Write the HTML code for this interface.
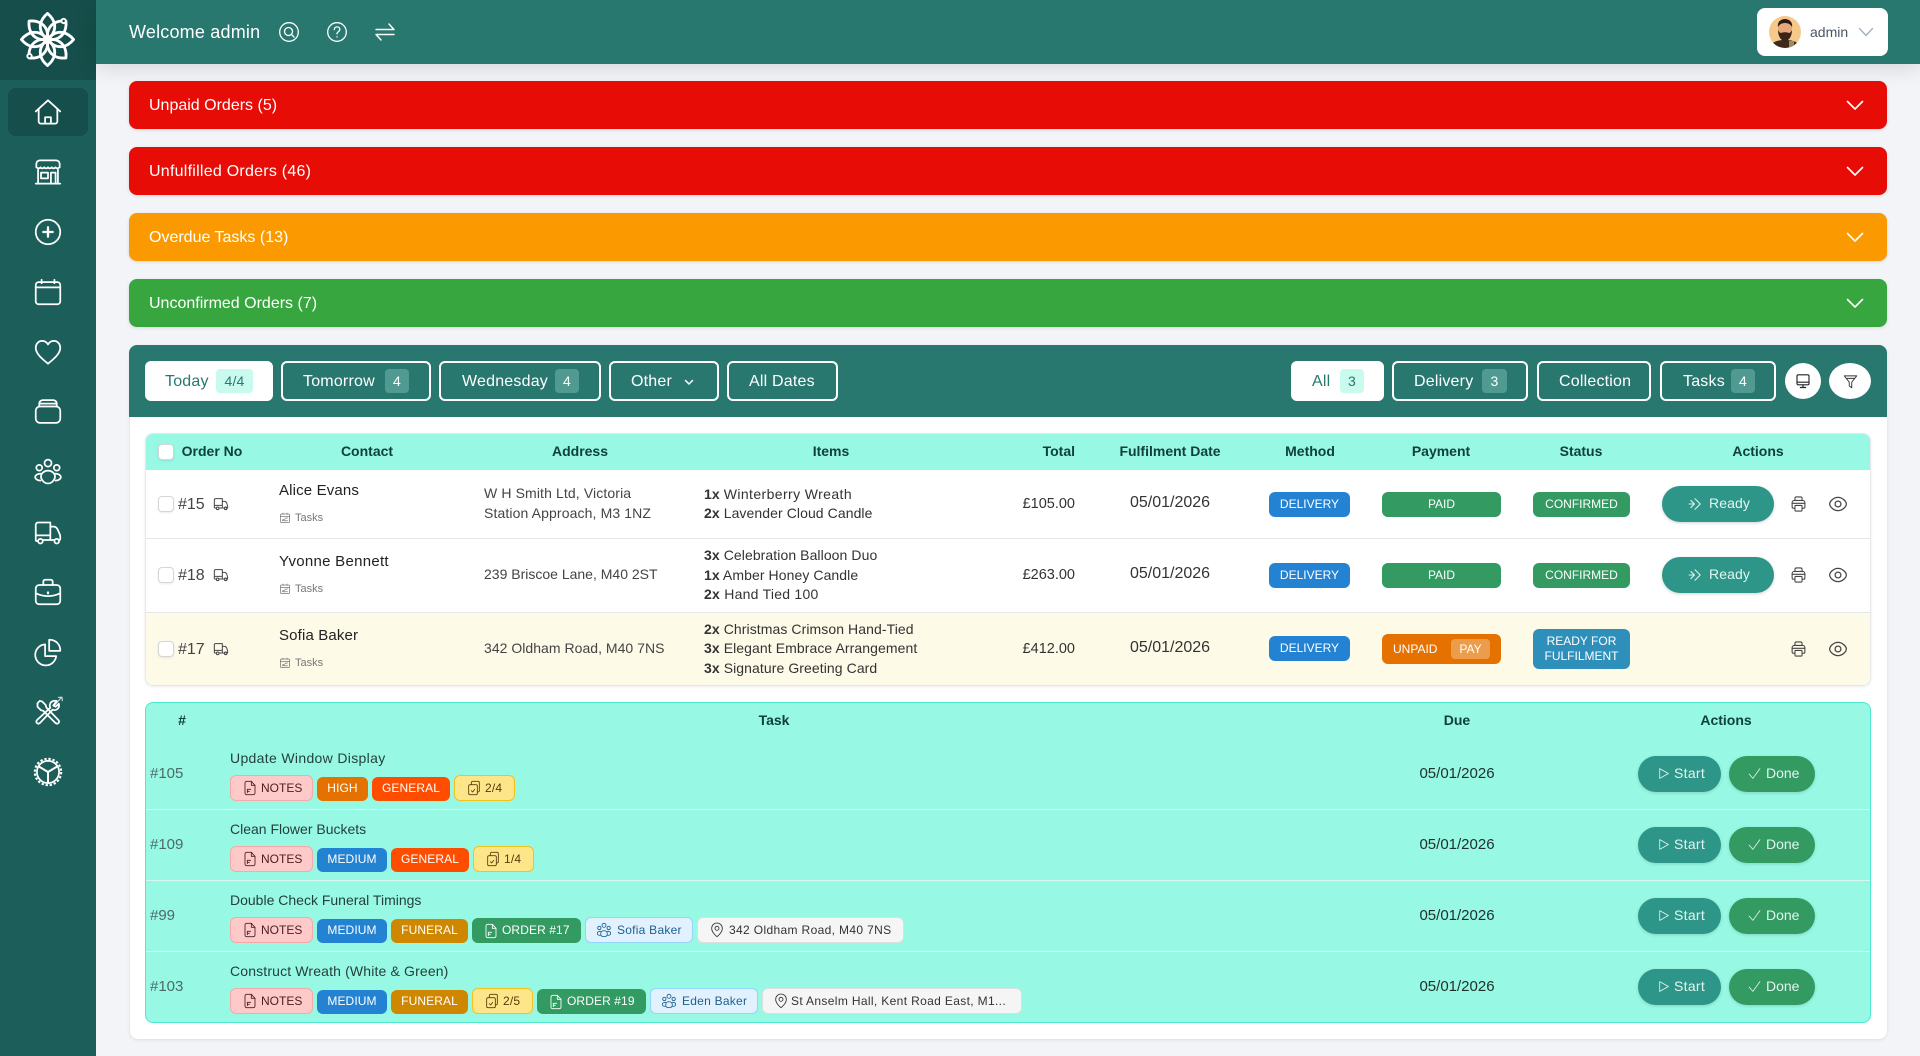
<!DOCTYPE html>
<html lang="en"><head><meta charset="utf-8"><title>Dashboard</title>
<style>
*{box-sizing:border-box}
html,body{margin:0;padding:0}
body{position:relative;width:1920px;height:1056px;overflow:hidden;background:#f2f4f8;font-family:"Liberation Sans",sans-serif;color:#222}
.a{position:absolute}
.t{position:absolute;white-space:nowrap;line-height:20px;height:20px}
.c{text-align:center;transform:translateX(-50%)}
.r{transform:translateX(-100%)}
svg{position:absolute;fill:none;stroke:currentColor;stroke-width:1.5;stroke-linecap:round;stroke-linejoin:round;overflow:visible}
.side svg{color:#fff;width:28px;height:28px;left:34px}
.al{position:absolute;left:129px;width:1758px;height:48px;border-radius:8px;color:#fff;font-size:16px;line-height:50px;padding-left:20px;box-shadow:0 1px 3px rgba(0,0,0,.12)}
.al svg{left:1718px;top:20px;width:16px;height:9px;stroke-width:1.6;color:#fff}
.btn{position:absolute;top:361px;height:40px;border-radius:6px;border:2px solid #fff;color:#fff;font-size:16px;letter-spacing:.2px}
.btn.on{background:#fff;color:#287870;border-color:#fff}
.btn span{position:absolute;top:0;line-height:38px;white-space:nowrap}
.cnt{position:absolute;top:6px;height:24px;width:24px;border-radius:4px;background:#519a92;color:#fff;font-size:14px;line-height:24px;text-align:center;font-style:normal}
.on .cnt{background:#c8faee;color:#287870}
.circ{position:absolute;top:363px;height:36px;border-radius:50%;background:#fff;color:#333}
.th{position:absolute;white-space:nowrap;font-size:14px;font-weight:700;line-height:20px;height:20px;color:#10403c}
.cb{position:absolute;width:16px;height:16px;border:1px solid #d4d6da;border-radius:4px;background:#fff;box-shadow:0 1px 2px rgba(0,0,0,.08)}
.sep{position:absolute;height:1px;background:#e5e7eb}
.no{font-size:16px;color:#444}
.nm{font-size:15px;color:#222;letter-spacing:.15px;margin-top:1px}
.tk{font-size:11px;color:#777;margin-top:1px}
.ad{font-size:14px;color:#444}
.it{font-size:14px;color:#333;letter-spacing:.08px}
.it b{font-weight:700;color:#333}
.tot{font-size:14.500px;color:#333}
.dt{font-size:16px;color:#333}
.pl{position:absolute;border-radius:6px;color:#fff;font-size:12px;display:flex;align-items:center;justify-content:center;white-space:nowrap;line-height:15px;text-align:center}
.rd{position:absolute;left:1662px;width:112px;height:36px;border-radius:18px;background:#2e9688;color:#e3f5f1;font-size:14px;line-height:35px;padding-left:47px;letter-spacing:.1px;box-shadow:0 1px 3px rgba(0,0,0,.18)}
.rd svg{left:26px;top:11px;width:14px;height:14px;color:#e3f5f1}
.ic{color:#444;stroke-width:1.5}
.tg{position:absolute;height:26px;border-radius:6px;font-size:12px;line-height:24px;white-space:nowrap;border:1px solid transparent}
.tg svg{width:16px;height:18px;top:3px;stroke-width:1.3}
.tg span{position:absolute;top:0;white-space:nowrap}
.col{top:2px;height:24px;color:#fff;text-align:center;line-height:23px;border:0;letter-spacing:.1px}
.nt{background:#fec9c9;border:1px solid #f7a8a8;color:#4d1d1d;left:230px;width:83px}
.cl{background:#fde68a;border:1px solid #f7c11b;color:#5a3a0a}
.us{background:#e1f2fe;border:1px solid #93d5fc;color:#1e5f8e;letter-spacing:.25px}
.lo{background:#f5f5f5;border:1px solid #dedede;color:#333;letter-spacing:.35px}
.ord{background:#339a62;color:#fff;top:1px;height:25px;border:0}
.tt{font-size:14px;color:#24403c}
.id{font-size:15px;color:#4c6a66;margin-top:1px}
.due{font-size:15px;color:#1f2f2d;margin-top:1px}
.st{position:absolute;left:1638px;width:83px;height:36px;border-radius:18px;background:#2e9688;color:#e3f5f1;font-size:14px;line-height:35px;padding-left:36px;letter-spacing:.3px;box-shadow:0 1px 3px rgba(0,0,0,.15)}
.dn{position:absolute;left:1729px;width:86px;height:36px;border-radius:18px;background:#339a62;color:#e3f5f1;font-size:14px;line-height:35px;padding-left:37px;box-shadow:0 1px 3px rgba(0,0,0,.15)}
.st svg,.dn svg{left:19px;top:11px;width:13px;height:13px;color:#e3f5f1}
.trk{left:213px;width:16px;height:16px;color:#444;stroke-width:1.500}
.cali{left:279px;width:12px;height:13px;color:#777;stroke-width:1.500}
</style></head><body>
<svg width="0" height="0" style="position:absolute">
<symbol id="truck" viewBox="0 0 24 24"><path d="M2 17V6a2 2 0 0 1 2-2h10v13M2 17a1 1 0 0 0 1 1h1.500M14 8h3.500c1.500 0 2.300.8 3 2.500l1 3c.3.800.5 1.500.5 2.500v1a1 1 0 0 1-1 1h-1.500M9.500 18H16.500M2 14h12"/><circle cx="7" cy="18.500" r="2"/><circle cx="19" cy="18.500" r="2"/></symbol>
<symbol id="cal" viewBox="0 0 24 24"><rect x="3" y="5" width="18" height="17" rx="2"/><path d="M3 10h18M8 3v3M16 3v3M7 17l3-1 4-3 3 0M7 18.500h10"/></symbol>
<symbol id="prn" viewBox="0 0 24 24"><path d="M7 7V4a2 2 0 0 1 2-2h6a2 2 0 0 1 2 2v3M7 18H5a2 2 0 0 1-2-2v-6a3 3 0 0 1 3-3h12a3 3 0 0 1 3 3v6a2 2 0 0 1-2 2h-2"/><rect x="7" y="14" width="10" height="8" rx="1"/><path d="M3 11h18"/></symbol>
<symbol id="eye" viewBox="0 0 24 24"><path d="M12 4c5.500 0 10 5 10 8s-4.500 8-10 8-10-5-10-8 4.500-8 10-8z"/><circle cx="12" cy="12" r="3.500"/></symbol>
<symbol id="dbl" viewBox="0 0 24 24"><path d="M12 3l9 9-9 9M5 6l6 6-6 6M2 12h9" stroke-width="1.800"/></symbol>
<symbol id="doc" viewBox="0 0 24 24"><path d="M14 2H7a2.500 2.500 0 0 0-2.500 2.500v15A2.500 2.500 0 0 0 7 22h10a2.500 2.500 0 0 0 2.500-2.500V8z"/><path d="M14 2v6h5.500M8 14h5M8 17h3M8 14v5"/></symbol>
<symbol id="clip" viewBox="0 0 24 24"><rect x="4" y="7" width="13" height="15" rx="2"/><path d="M8 7V4a2 2 0 0 1 2-2h8a2 2 0 0 1 2 2v12a2 2 0 0 1-2 2h-1M8 16l2 2 3-4"/></symbol>
<symbol id="us" viewBox="0 0 24 24"><circle cx="12" cy="5" r="3"/><circle cx="5" cy="9" r="2.500"/><circle cx="19" cy="9" r="2.500"/><path d="M7 18c0-3 2-5 5-5s5 2 5 5-2 4-5 4-5-1-5-4zM7 14c-3 0-5 1-5 3s2 3 4 3M17 14c3 0 5 1 5 3s-2 3-4 3"/></symbol>
<symbol id="pin" viewBox="0 0 24 24"><path d="M12 22s-8-6-8-12.500A8 8 0 0 1 20 9.500C20 16 12 22 12 22z"/><circle cx="12" cy="9.500" r="3"/></symbol>
<symbol id="play" viewBox="0 0 24 24"><path d="M5 3l16 9-16 9z"/></symbol>
<symbol id="chk" viewBox="0 0 24 24"><path d="M2 13l7 8L22 3"/></symbol>
<symbol id="pet" viewBox="0 0 58 58"><path d="M29 1.500C37 8 39 17 33.500 24.500L29 30l-4.500-5.500C19 17 21 8 29 1.500z"/></symbol>
</svg>

<!-- sidebar -->
<div class="a side" style="left:0;top:0;width:96px;height:1056px;background:#1c5f5a">
<div class="a" style="left:0;top:0;width:96px;height:80px;background:#154e4a"></div>
<svg style="left:20px;top:12px;width:55px;height:55px;color:#fff;stroke-width:3" viewBox="0 0 58 58">
<use href="#pet"/>
<use href="#pet" transform="rotate(45 29 29)"/>
<use href="#pet" transform="rotate(90 29 29)"/>
<use href="#pet" transform="rotate(135 29 29)"/>
<use href="#pet" transform="rotate(180 29 29)"/>
<use href="#pet" transform="rotate(225 29 29)"/>
<use href="#pet" transform="rotate(270 29 29)"/>
<use href="#pet" transform="rotate(315 29 29)"/>
<circle cx="46" cy="9.500" r="2.300" fill="#154e4a" stroke-width="2"/><circle cx="10" cy="46.500" r="2.300" fill="#154e4a" stroke-width="2"/>
</svg>
<div class="a" style="left:8px;top:88px;width:80px;height:48px;border-radius:8px;background:#154e4a"></div>
<svg style="top:98px" viewBox="0 0 24 24"><path d="M1.500 11.500L12 2l10.500 9.500M4 9.500V20a2 2 0 0 0 2 2h12a2 2 0 0 0 2-2V9.500M9.500 22v-5.500h5V22"/></svg>
<svg style="top:158px" viewBox="0 0 24 24"><path d="M2 8V5a3 3 0 0 1 3-3h14a3 3 0 0 1 3 3v3c-1.500 1.200-3 1-3.600 0-1 1.200-2.500 1.200-3.200 0-1 1.200-2.400 1.200-3.200 0-1 1.200-2.400 1.200-3.200 0-1 1.200-2.500 1.200-3.200 0C5 9 3.500 9.200 2 8zM3.500 10v12M20.500 10v12M1.500 22h21"/><rect x="6" y="12.500" width="6" height="5"/><path d="M14.500 22v-9.500h4V22"/></svg>
<svg style="top:218px" viewBox="0 0 24 24"><circle cx="12" cy="12" r="10.500"/><path d="M8 12h8M12 8v8" stroke-width="2"/></svg>
<svg style="top:278px" viewBox="0 0 24 24"><rect x="1.500" y="3.500" width="21" height="19" rx="2.500"/><path d="M1.500 8h21M6.500 1.500v3M17.500 1.500v3"/></svg>
<svg style="top:338px" viewBox="0 0 24 24"><path d="M12 22C7 18 1.500 13.500 1.500 8.500 1.500 5 4 2.500 7 2.500c2 0 3.800 1 5 3 1.200-2 3-3 5-3 3 0 5.500 2.500 5.500 6 0 5-5.500 9.500-10.500 13.500z"/></svg>
<svg style="top:396px" viewBox="0 0 24 24"><rect x="1.500" y="9" width="21" height="14" rx="3.500"/><path d="M4.500 9V6.500A3 3 0 0 1 7.500 3.500h9a3 3 0 0 1 3 3V9M5.500 6.500h13"/></svg>
<svg style="top:459px" viewBox="0 0 24 24"><circle cx="12" cy="3.500" r="3"/><circle cx="4.500" cy="7.500" r="2.500"/><circle cx="19.500" cy="7.500" r="2.500"/><path d="M6 15c0-3 3-5 6-5s6 2 6 5-3 6-6 6-6-3-6-6zM5.500 12.500C3 12.500 1 14 1 15.500s2 3 4.500 3M18.500 12.500c2.500 0 4.500 1.500 4.500 3s-2 3-4.500 3"/></svg>
<svg style="top:519px" viewBox="0 0 24 24"><path d="M1.500 18V5a2 2 0 0 1 2-2H14v15H7.500M1.500 14h12.500M14 6.500h3c1.500 0 2.300.8 3 2l2 4.500c.4.900.5 1.700.5 2.500V17a1 1 0 0 1-1 1h-.5M17.500 18H14M1.500 18c0 .6.500 1 1 1"/><circle cx="5.500" cy="19" r="2"/><circle cx="19.500" cy="19" r="2"/></svg>
<svg style="top:578px" viewBox="0 0 24 24"><rect x="1.500" y="6" width="21" height="16.500" rx="3"/><path d="M8 6V3a1.500 1.500 0 0 1 1.500-1.500h5A1.500 1.500 0 0 1 16 3v3M1.500 13C5 15 8 15.500 12 15.500s7-.5 10.500-2.500"/><path d="M12 12.500v.5" stroke-width="2"/></svg>
<svg style="top:638px" viewBox="0 0 24 24"><path d="M9.500 5.500A9 9 0 1 0 19 15.500h-9.500z"/><path d="M13 1.500a9 9 0 0 1 9.500 9.500H13z"/></svg>
<svg style="top:698px" viewBox="0 0 24 24"><path d="M3 4.500l2-2 2 .5 3 3 .5 2L21 19c1.500 1.500-.5 4-2.500 2.500L8 11l-2-.5-3-3z"/><path d="M19.500 2.500c-2-.5-4.500 0-5.500 2-.7 1.500-.5 3 0 3.800L2.500 19c-1.500 1.500.5 4 2.500 2.500L16 10c1 .6 2.700.5 4-.5 1.300-1.200 1.800-3 1.300-4.500l-2.800 2.500-2-1z"/><path d="M18 6l5.500-6.500M21 -.5l3 -.2.300 3" stroke-width="1" opacity=".75"/></svg>
<svg style="top:758px" viewBox="0 0 24 24"><circle cx="12" cy="12" r="9.500"/><circle cx="12" cy="12" r="11.300" stroke-width="1.800" stroke-dasharray="2 1.550" stroke-linecap="butt"/><path d="M12 12V21M12 12L4.500 7.500M12 12l7.500-4.500" stroke-width="1.700"/></svg>
</div>

<!-- topbar -->
<div class="a" style="left:96px;top:0;width:1824px;height:64px;background:#287870;box-shadow:0 4px 20px rgba(0,0,0,.12)"></div>
<div class="t" style="left:129px;top:22px;font-size:18px;color:#fff;letter-spacing:.2px">Welcome admin</div>
<svg style="left:279px;top:22px;width:20px;height:20px;color:#fff;stroke-width:1.300" viewBox="0 0 20 20"><circle cx="10" cy="10" r="9.300"/><circle cx="9.500" cy="9.500" r="4"/><path d="M12.500 12.500l2.500 2.500"/></svg>
<svg style="left:327px;top:22px;width:20px;height:20px;color:#fff;stroke-width:1.300" viewBox="0 0 20 20"><circle cx="10" cy="10" r="9.300"/><path d="M7.300 7.600c0-1.600 1.200-2.700 2.800-2.700s2.700 1.100 2.700 2.500c0 1.300-.8 1.900-1.700 2.500-.8.500-1.100 1-1.100 2M10 14.800v.2"/></svg>
<svg style="left:375px;top:22px;width:20px;height:20px;color:#fff;stroke-width:1.400" viewBox="0 0 20 20"><path d="M1 7.500h18l-5-5.500M19 12.500H1l5 5.500"/></svg>
<div class="a" style="left:1757px;top:8px;width:131px;height:48px;background:#fff;border-radius:8px"></div>
<svg style="left:1769px;top:16px;width:32px;height:32px;stroke:none" viewBox="0 0 32 32"><defs><clipPath id="av"><circle cx="16" cy="16" r="16"/></clipPath></defs><g clip-path="url(#av)"><rect width="32" height="32" fill="#f6c98a"/><path d="M1 32c1-6 7-8 15-8s14 2 15 8z" fill="#3b2a1d"/><ellipse cx="16" cy="13" rx="7" ry="8" fill="#e6a878"/><path d="M9 14c0 6 3 11 7 11s7-5 7-11c-1 2-2 3-3 3-2-1-6-1-8 0-1 0-2-1-3-3z" fill="#3a2419"/><path d="M9 11c-1-5 3-8 7-8s8 3 7 8c-1-2-3-4-7-4s-6 2-7 4z" fill="#2b1a12"/><rect x="20" y="25" width="5" height="6" fill="#a08a62"/></g></svg>
<div class="t" style="left:1810px;top:22px;font-size:14px;color:#4a5568">admin</div>
<svg style="left:1859px;top:28px;width:14px;height:8px;color:#a0aec0;stroke-width:1.300" viewBox="0 0 14 8"><path d="M.5.5L7 7.500 13.500.5"/></svg>

<!-- alerts -->
<div class="al" style="top:81px;background:#e80c07">Unpaid Orders (5)<svg viewBox="0 0 16 9"><path d="M.5.500L8 8 15.500.5"/></svg></div>
<div class="al" style="top:147px;background:#e80c07;letter-spacing:.25px">Unfulfilled Orders (46)<svg viewBox="0 0 16 9"><path d="M.5.500L8 8 15.500.5"/></svg></div>
<div class="al" style="top:213px;background:#fb9a00">Overdue Tasks (13)<svg viewBox="0 0 16 9"><path d="M.5.500L8 8 15.500.5"/></svg></div>
<div class="al" style="top:279px;background:#37a63e">Unconfirmed Orders (7)<svg viewBox="0 0 16 9"><path d="M.5.500L8 8 15.500.5"/></svg></div>

<!-- card -->
<div class="a" style="left:130px;top:345px;width:1757px;height:694px;background:#fff;border-radius:8px;box-shadow:0 1px 3px rgba(0,0,0,.1)"></div>
<div class="a" style="left:129px;top:345px;width:1758px;height:72px;background:#287870;border-radius:8px 8px 0 0"></div>

<div class="btn on" style="left:145px;width:128px"><span style="left:18px">Today</span><i class="cnt" style="left:69px;width:37px">4/4</i></div>
<div class="btn" style="left:281px;width:150px"><span style="left:20px">Tomorrow</span><i class="cnt" style="left:102px">4</i></div>
<div class="btn" style="left:439px;width:162px"><span style="left:21px">Wednesday</span><i class="cnt" style="left:114px">4</i></div>
<div class="btn" style="left:609px;width:110px"><span style="left:20px">Other</span><svg style="left:74px;top:17px;width:8px;height:5px;color:#fff" viewBox="0 0 8 5"><path d="M.5.500L4 4 7.500.5"/></svg></div>
<div class="btn" style="left:727px;width:111px"><span style="left:20px">All Dates</span></div>

<div class="btn on" style="left:1291px;width:93px"><span style="left:19px">All</span><i class="cnt" style="left:47px">3</i></div>
<div class="btn" style="left:1392px;width:136px"><span style="left:20px">Delivery</span><i class="cnt" style="left:88px;width:25px">3</i></div>
<div class="btn" style="left:1537px;width:114px"><span style="left:20px">Collection</span></div>
<div class="btn" style="left:1660px;width:116px"><span style="left:21px">Tasks</span><i class="cnt" style="left:69px">4</i></div>
<div class="circ" style="left:1785px;width:36px"><svg style="left:10px;top:10px;width:16px;height:17px;color:#222;stroke-width:1.700" viewBox="0 0 24 24"><rect x="3" y="2" width="18" height="15" rx="2"/><path d="M3 13h18M8 21h8M12 17v4"/></svg></div>
<div class="circ" style="left:1829px;width:42px"><svg style="left:14px;top:11px;width:15px;height:15px;color:#333;stroke-width:1.500" viewBox="0 0 24 24"><path d="M2 3h20l-8 10v9l-4-3v-6z"/><path d="M6 7h12"/></svg></div>

<!-- orders table -->
<div class="a" style="left:145px;top:433px;width:1726px;height:253px;border:1px solid #e5e7eb;border-radius:8px;box-shadow:0 1px 3px rgba(0,0,0,.08);overflow:hidden">
 <div class="a" style="left:0;top:0;width:1724px;height:36px;background:#97f8e3"></div>
 <div class="a" style="left:0;top:179px;width:1724px;height:73px;background:#fefae8"></div>
</div>
<div class="cb" style="left:158px;top:444px"></div>
<div class="th c" style="left:212px;top:441px">Order No</div>
<div class="th c" style="left:367px;top:441px">Contact</div>
<div class="th c" style="left:580px;top:441px">Address</div>
<div class="th c" style="left:831px;top:441px">Items</div>
<div class="th r" style="left:1075px;top:441px">Total</div>
<div class="th c" style="left:1170px;top:441px">Fulfilment Date</div>
<div class="th c" style="left:1310px;top:441px">Method</div>
<div class="th c" style="left:1441px;top:441px">Payment</div>
<div class="th c" style="left:1581px;top:441px">Status</div>
<div class="th c" style="left:1758px;top:441px">Actions</div>
<div class="sep" style="left:146px;top:538px;width:1724px"></div>
<div class="sep" style="left:146px;top:612px;width:1724px"></div>

<!-- row 1 -->
<div class="cb" style="left:158px;top:496px"></div>
<div class="t no" style="left:178px;top:495px">#15</div>
<svg class="trk" style="top:496px" viewBox="0 0 24 24"><use href="#truck"/></svg>
<div class="t nm" style="left:279px;top:480px">Alice Evans</div>
<svg class="cali" style="top:511px" viewBox="0 0 24 24"><use href="#cal"/></svg>
<div class="t tk" style="left:295px;top:507px">Tasks</div>
<div class="t ad" style="left:484px;top:483px;letter-spacing:.12px">W H Smith Ltd, Victoria</div>
<div class="t ad" style="left:484px;top:503px;letter-spacing:.12px">Station Approach, M3 1NZ</div>
<div class="t it" style="left:704px;top:484px"><b>1x</b> <span style="letter-spacing:.4px">Winterberry Wreath</span></div>
<div class="t it" style="left:704px;top:503px"><b>2x</b> Lavender Cloud Candle</div>
<div class="t tot r" style="left:1075px;top:494px">£105.00</div>
<div class="t dt c" style="left:1170px;top:493px">05/01/2026</div>
<div class="pl" style="left:1269px;top:492px;width:81px;height:25px;background:#2482d3">DELIVERY</div>
<div class="pl" style="left:1382px;top:492px;width:119px;height:25px;background:#339a62">PAID</div>
<div class="pl" style="left:1533px;top:492px;width:97px;height:25px;background:#339a62">CONFIRMED</div>
<div class="rd" style="top:486px"><svg viewBox="0 0 24 24"><use href="#dbl"/></svg>Ready</div>
<svg class="ic" style="left:1790px;top:495px;width:17px;height:18px" viewBox="0 0 24 24"><use href="#prn"/></svg>
<svg class="ic" style="left:1828px;top:494px;width:20px;height:20px" viewBox="0 0 24 24"><use href="#eye"/></svg>

<!-- row 2 -->
<div class="cb" style="left:158px;top:567px"></div>
<div class="t no" style="left:178px;top:566px">#18</div>
<svg class="trk" style="top:567px" viewBox="0 0 24 24"><use href="#truck"/></svg>
<div class="t nm" style="left:279px;top:551px;letter-spacing:.28px">Yvonne Bennett</div>
<svg class="cali" style="top:582px" viewBox="0 0 24 24"><use href="#cal"/></svg>
<div class="t tk" style="left:295px;top:578px">Tasks</div>
<div class="t ad" style="left:484px;top:564px">239 Briscoe Lane, M40 2ST</div>
<div class="t it" style="left:704px;top:545px"><b>3x</b> Celebration Balloon Duo</div>
<div class="t it" style="left:704px;top:565px"><b>1x</b> Amber Honey Candle</div>
<div class="t it" style="left:704px;top:584px;letter-spacing:.25px"><b>2x</b> Hand Tied 100</div>
<div class="t tot r" style="left:1075px;top:565px">£263.00</div>
<div class="t dt c" style="left:1170px;top:564px">05/01/2026</div>
<div class="pl" style="left:1269px;top:563px;width:81px;height:25px;background:#2482d3">DELIVERY</div>
<div class="pl" style="left:1382px;top:563px;width:119px;height:25px;background:#339a62">PAID</div>
<div class="pl" style="left:1533px;top:563px;width:97px;height:25px;background:#339a62">CONFIRMED</div>
<div class="rd" style="top:557px"><svg viewBox="0 0 24 24"><use href="#dbl"/></svg>Ready</div>
<svg class="ic" style="left:1790px;top:566px;width:17px;height:18px" viewBox="0 0 24 24"><use href="#prn"/></svg>
<svg class="ic" style="left:1828px;top:565px;width:20px;height:20px" viewBox="0 0 24 24"><use href="#eye"/></svg>

<!-- row 3 -->
<div class="cb" style="left:158px;top:641px"></div>
<div class="t no" style="left:178px;top:640px">#17</div>
<svg class="trk" style="top:641px" viewBox="0 0 24 24"><use href="#truck"/></svg>
<div class="t nm" style="left:279px;top:625px">Sofia Baker</div>
<svg class="cali" style="top:656px" viewBox="0 0 24 24"><use href="#cal"/></svg>
<div class="t tk" style="left:295px;top:652px">Tasks</div>
<div class="t ad" style="left:484px;top:638px;letter-spacing:.03px">342 Oldham Road, M40 7NS</div>
<div class="t it" style="left:704px;top:619px"><b>2x</b> Christmas Crimson Hand-Tied</div>
<div class="t it" style="left:704px;top:638px"><b>3x</b> Elegant Embrace Arrangement</div>
<div class="t it" style="left:704px;top:658px"><b>3x</b> Signature Greeting Card</div>
<div class="t tot r" style="left:1075px;top:639px">£412.00</div>
<div class="t dt c" style="left:1170px;top:638px">05/01/2026</div>
<div class="pl" style="left:1269px;top:636px;width:81px;height:25px;background:#2482d3">DELIVERY</div>
<div class="pl" style="left:1382px;top:634px;width:119px;height:30px;background:#e57200;justify-content:flex-start;padding-left:11px">UNPAID<span class="a" style="left:69px;top:5px;width:39px;height:20px;border-radius:4px;background:#ec9d4c;line-height:20px">PAY</span></div>
<div class="pl" style="left:1533px;top:629px;width:97px;height:40px;background:#2e90ba">READY FOR<br>FULFILMENT</div>
<svg class="ic" style="left:1790px;top:640px;width:17px;height:18px" viewBox="0 0 24 24"><use href="#prn"/></svg>
<svg class="ic" style="left:1828px;top:639px;width:20px;height:20px" viewBox="0 0 24 24"><use href="#eye"/></svg>

<!-- tasks table -->
<div class="a" style="left:145px;top:702px;width:1726px;height:321px;background:#97f8e3;border:1px solid #4de8cd;border-radius:8px"></div>
<div class="th c" style="left:182px;top:710px">#</div>
<div class="th c" style="left:774px;top:710px">Task</div>
<div class="th c" style="left:1457px;top:710px">Due</div>
<div class="th c" style="left:1726px;top:710px">Actions</div>
<div class="sep" style="left:146px;top:809px;width:1724px;background:#d6f8f0"></div>
<div class="sep" style="left:146px;top:880px;width:1724px;background:#d6f8f0"></div>
<div class="sep" style="left:146px;top:951px;width:1724px;background:#d6f8f0"></div>

<!-- task 1 -->
<div class="t id" style="left:150px;top:763px">#105</div>
<div class="t tt" style="left:230px;top:748px;letter-spacing:.33px">Update Window Display</div>
<div class="a" style="left:0;top:775px">
 <div class="tg nt"><svg style="left:11px" viewBox="0 0 24 24"><use href="#doc"/></svg><span style="left:30px">NOTES</span></div>
 <div class="tg col" style="left:317px;width:51px;background:#e57200">HIGH</div>
 <div class="tg col" style="left:372px;width:78px;background:#ff4d00">GENERAL</div>
 <div class="tg cl" style="left:454px;width:61px"><svg style="left:11px" viewBox="0 0 24 24"><use href="#clip"/></svg><span style="left:30px;letter-spacing:.2px">2/4</span></div>
</div>
<div class="t due c" style="left:1457px;top:763px">05/01/2026</div>
<div class="st" style="top:756px"><svg viewBox="0 0 24 24"><use href="#play"/></svg>Start</div>
<div class="dn" style="top:756px"><svg viewBox="0 0 24 24"><use href="#chk"/></svg>Done</div>

<!-- task 2 -->
<div class="t id" style="left:150px;top:834px">#109</div>
<div class="t tt" style="left:230px;top:819px">Clean Flower Buckets</div>
<div class="a" style="left:0;top:846px">
 <div class="tg nt"><svg style="left:11px" viewBox="0 0 24 24"><use href="#doc"/></svg><span style="left:30px">NOTES</span></div>
 <div class="tg col" style="left:317px;width:70px;background:#2482d3">MEDIUM</div>
 <div class="tg col" style="left:391px;width:78px;background:#ff4d00">GENERAL</div>
 <div class="tg cl" style="left:473px;width:61px"><svg style="left:11px" viewBox="0 0 24 24"><use href="#clip"/></svg><span style="left:30px;letter-spacing:.2px">1/4</span></div>
</div>
<div class="t due c" style="left:1457px;top:834px">05/01/2026</div>
<div class="st" style="top:827px"><svg viewBox="0 0 24 24"><use href="#play"/></svg>Start</div>
<div class="dn" style="top:827px"><svg viewBox="0 0 24 24"><use href="#chk"/></svg>Done</div>

<!-- task 3 -->
<div class="t id" style="left:150px;top:905px">#99</div>
<div class="t tt" style="left:230px;top:890px">Double Check Funeral Timings</div>
<div class="a" style="left:0;top:917px">
 <div class="tg nt"><svg style="left:11px" viewBox="0 0 24 24"><use href="#doc"/></svg><span style="left:30px">NOTES</span></div>
 <div class="tg col" style="left:317px;width:70px;background:#2482d3">MEDIUM</div>
 <div class="tg col" style="left:391px;width:77px;background:#cf8700">FUNERAL</div>
 <div class="tg ord" style="left:472px;width:109px"><svg style="left:11px;top:4px;color:#fff" viewBox="0 0 24 24"><use href="#doc"/></svg><span style="left:30px;line-height:24px;letter-spacing:.1px">ORDER #17</span></div>
 <div class="tg us" style="left:585px;width:108px"><svg style="left:10px" viewBox="0 0 24 24"><use href="#us"/></svg><span style="left:31px">Sofia Baker</span></div>
 <div class="tg lo" style="left:697px;width:207px"><svg style="left:11px" viewBox="0 0 24 24"><use href="#pin"/></svg><span style="left:31px">342 Oldham Road, M40 7NS</span></div>
</div>
<div class="t due c" style="left:1457px;top:905px">05/01/2026</div>
<div class="st" style="top:898px"><svg viewBox="0 0 24 24"><use href="#play"/></svg>Start</div>
<div class="dn" style="top:898px"><svg viewBox="0 0 24 24"><use href="#chk"/></svg>Done</div>

<!-- task 4 -->
<div class="t id" style="left:150px;top:976px">#103</div>
<div class="t tt" style="left:230px;top:961px;letter-spacing:.15px">Construct Wreath (White &amp; Green)</div>
<div class="a" style="left:0;top:988px">
 <div class="tg nt"><svg style="left:11px" viewBox="0 0 24 24"><use href="#doc"/></svg><span style="left:30px">NOTES</span></div>
 <div class="tg col" style="left:317px;width:70px;background:#2482d3">MEDIUM</div>
 <div class="tg col" style="left:391px;width:77px;background:#cf8700">FUNERAL</div>
 <div class="tg cl" style="left:472px;width:61px"><svg style="left:11px" viewBox="0 0 24 24"><use href="#clip"/></svg><span style="left:30px;letter-spacing:.2px">2/5</span></div>
 <div class="tg ord" style="left:537px;width:109px"><svg style="left:11px;top:4px;color:#fff" viewBox="0 0 24 24"><use href="#doc"/></svg><span style="left:30px;line-height:24px;letter-spacing:.1px">ORDER #19</span></div>
 <div class="tg us" style="left:650px;width:108px"><svg style="left:10px" viewBox="0 0 24 24"><use href="#us"/></svg><span style="left:31px">Eden Baker</span></div>
 <div class="tg lo" style="left:762px;width:260px"><svg style="left:10px" viewBox="0 0 24 24"><use href="#pin"/></svg><span style="left:28px">St Anselm Hall, Kent Road East, M1...</span></div>
</div>
<div class="t due c" style="left:1457px;top:976px">05/01/2026</div>
<div class="st" style="top:969px"><svg viewBox="0 0 24 24"><use href="#play"/></svg>Start</div>
<div class="dn" style="top:969px"><svg viewBox="0 0 24 24"><use href="#chk"/></svg>Done</div>
</body></html>
